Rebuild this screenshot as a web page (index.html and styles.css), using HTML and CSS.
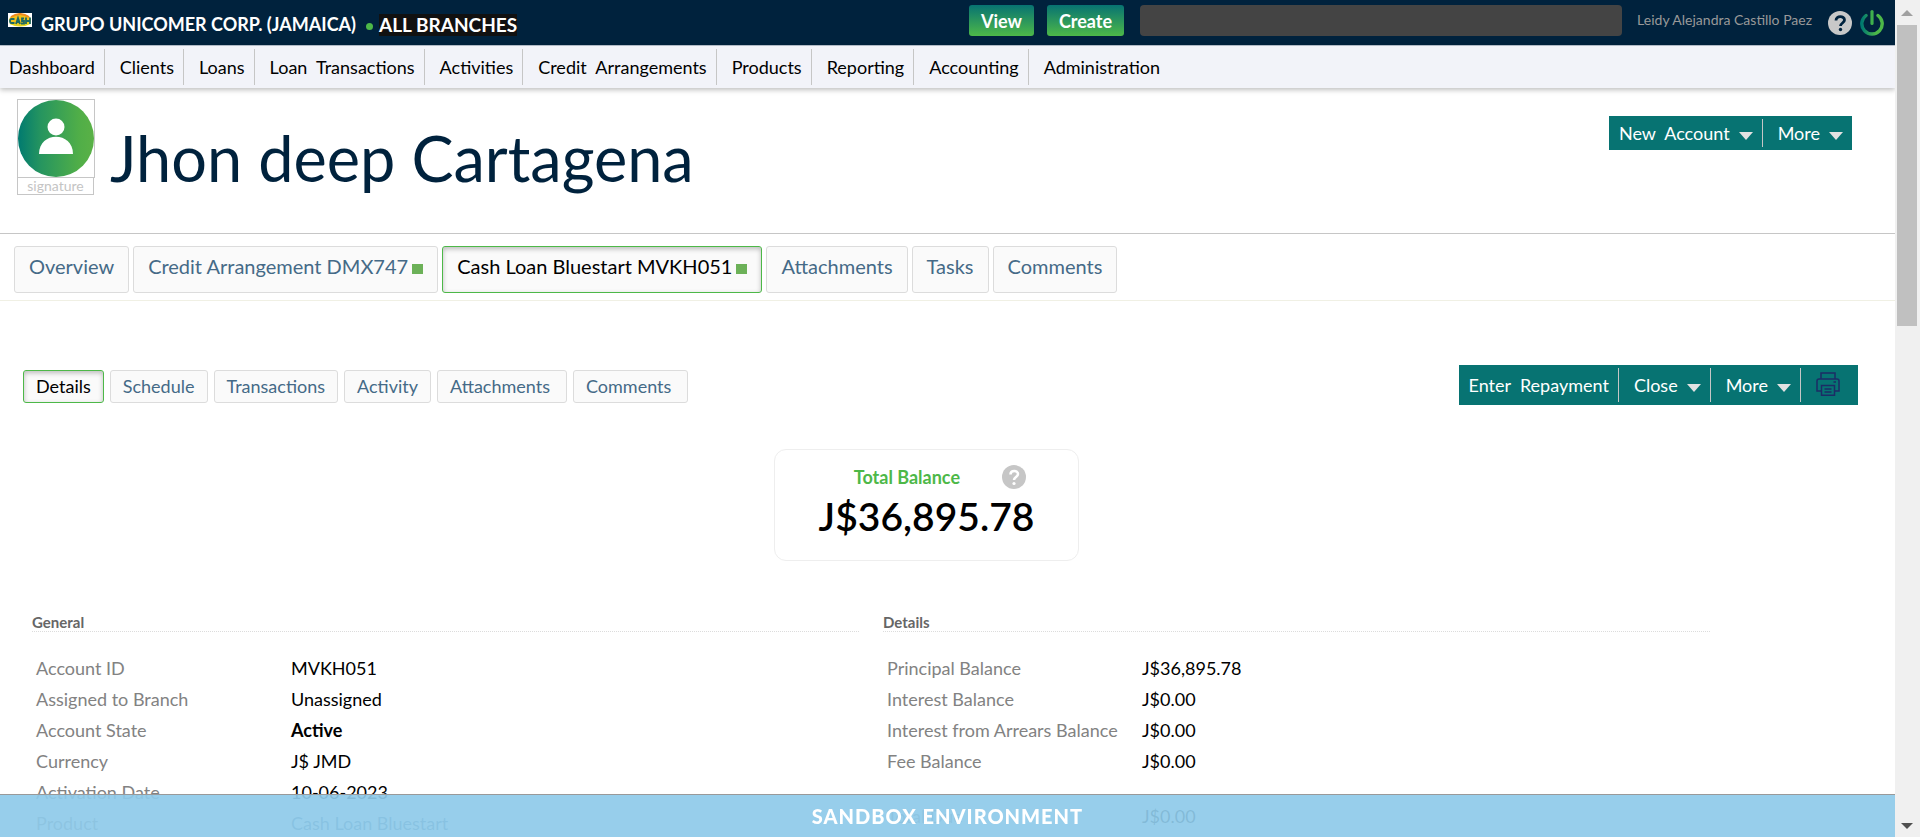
FILE: index.html
```html
<!DOCTYPE html>
<html lang="en">
<head>
<meta charset="utf-8">
<title>Jhon deep Cartagena</title>
<link rel="stylesheet" href="styles.css">
</head>
<body>
<div class="page">
  <header class="topbar">
    <svg class="logo" viewBox="0 0 24 14" aria-hidden="true">
      <rect width="24" height="14" fill="#fff"/>
      <ellipse cx="12" cy="7" rx="11" ry="6" fill="#f2c21a"/>
      <path d="M3 4 Q12 -2 21 4" stroke="#ef8a1f" stroke-width="2" fill="none"/>
      <path d="M2 10 Q12 15 22 10" stroke="#e6d61c" stroke-width="2" fill="none"/>
      <g fill="none" stroke="#1e6a62" stroke-width="1.8"><path d="M6.500 6H3.500q-1.500 0-1.500 2t1.500 2h3"/><path d="M8 11l2-6 2 6M8.500 9h3"/><path d="M16 5.500h-2v2.500h2v2.500h-3"/><path d="M18 4.500v6.500M22 4.500v6.500M18 8h4"/></g>
    </svg>
    <strong class="org">GRUPO UNICOMER CORP. (JAMAICA)</strong>
    <span class="dot"></span>
    <strong class="branches">ALL BRANCHES</strong>
    <div class="tools">
      <button class="pill" type="button">View</button>
      <button class="pill" type="button">Create</button>
      <input class="search" type="search" aria-label="Search">
    </div>
    <a class="user" href="#">Leidy Alejandra Castillo Paez</a>
    <a class="icon-link" href="#" aria-label="Help">
      <svg width="24" height="24" viewBox="0 0 24 24"><circle cx="12" cy="12" r="12" fill="#c8c8c8"/><path d="M8 9.500C8 4.500 16.500 4.500 16.500 9c0 3-4 3-4 6" fill="none" stroke="#00223d" stroke-width="2.800"/><circle cx="12.500" cy="18.500" r="1.700" fill="#00223d"/></svg>
    </a>
    <a class="icon-link" href="#" aria-label="Log out">
      <svg width="24" height="26" viewBox="0 0 24 26"><defs><linearGradient id="pw"><stop stop-color="#007a70"/><stop offset=".7" stop-color="#4db848"/></linearGradient></defs><path d="M6 5.500a10.200 10.200 0 1 0 12 0" fill="none" stroke="url(#pw)" stroke-width="3.400" stroke-linecap="round"/><rect x="10.400" y="0" width="3.200" height="15" rx="1.600" fill="#3fb04d"/></svg>
    </a>
  </header>
  <nav class="mainnav">
    <a href="#">Dashboard</a><a href="#">Clients</a><a href="#">Loans</a><a href="#">Loan&nbsp; Transactions</a><a href="#">Activities</a><a href="#">Credit&nbsp; Arrangements</a><a href="#">Products</a><a href="#">Reporting</a><a href="#">Accounting</a><a href="#">Administration</a>
  </nav>
  <section class="client">
    <div class="portrait">
      <div class="photo">
        <svg viewBox="0 0 76 77" aria-hidden="true"><defs><linearGradient id="av"><stop stop-color="#007a70"/><stop offset=".3" stop-color="#26955f"/><stop offset=".8" stop-color="#50ae48"/><stop offset="1" stop-color="#5ab146"/></linearGradient></defs><ellipse cx="38" cy="38.500" rx="38" ry="38.500" fill="url(#av)"/><circle cx="38" cy="27" r="8.500" fill="#fff"/><path d="M21 54c0-23 34-23 34 0z" fill="#fff"/></svg>
      </div>
      <div class="signature">signature</div>
    </div>
    <h1>Jhon deep Cartagena</h1>
    <div class="actions">
      <button type="button">New&nbsp; Account<span class="caret"></span></button>
      <button type="button">More<span class="caret"></span></button>
    </div>
  </section>
  <nav class="tabs">
    <a href="#">Overview</a>
    <a href="#">Credit Arrangement DMX747<span class="state"></span></a>
    <a class="current" href="#">Cash Loan Bluestart MVKH051<span class="state"></span></a>
    <a href="#">Attachments</a>
    <a href="#">Tasks</a>
    <a href="#">Comments</a>
  </nav>
  <div class="subbar">
    <nav class="subtabs">
      <a class="current" href="#">Details</a>
      <a href="#">Schedule</a>
      <a href="#">Transactions</a>
      <a href="#">Activity</a>
      <a class="wide" href="#">Attachments</a>
      <a class="wide" href="#">Comments</a>
    </nav>
    <div class="actions tall">
      <button type="button">Enter&nbsp; Repayment</button>
      <button type="button">Close<span class="caret"></span></button>
      <button type="button">More<span class="caret"></span></button>
      <button class="print" type="button" aria-label="Print">
        <svg width="24" height="24" viewBox="0 0 24 24" fill="none" stroke="#1c2c66" stroke-width="1.500"><path d="M5 7V1h14v6M5 19H1V9q0-2 2-2h18q2 0 2 2v10h-4"/><path d="M5.500 13.500h13v9.800h-13zM8.500 17h7M8.500 20h7M17.500 10h2.500"/></svg>
      </button>
    </div>
  </div>
  <div class="summary">
    <section class="balance">
      <div class="balance-head">
        <h2>Total Balance</h2>
        <a class="hint" href="#" aria-label="About total balance"><svg width="24" height="24" viewBox="0 0 24 24"><circle cx="12" cy="12" r="12" fill="#c6c6c6"/><path d="M8.500 9.500C8.500 5 16 5 16 9c0 3-4 3-4 6" fill="none" stroke="#fff" stroke-width="2.600"/><circle cx="12" cy="18.500" r="1.600" fill="#fff"/></svg></a>
      </div>
      <p class="amount">J$36,895.78</p>
    </section>
  </div>
  <div class="columns">
    <section>
      <h3>General</h3>
      <table>
        <tr><th scope="row">Account ID</th><td>MVKH051</td></tr>
        <tr><th scope="row">Assigned to Branch</th><td>Unassigned</td></tr>
        <tr><th scope="row">Account State</th><td><b>Active</b></td></tr>
        <tr><th scope="row">Currency</th><td>J$ JMD</td></tr>
        <tr><th scope="row">Activation Date</th><td>10-06-2023</td></tr>
        <tr><th scope="row">Product</th><td class="link">Cash Loan Bluestart</td></tr>
      </table>
    </section>
    <section>
      <h3>Details</h3>
      <table>
        <tr><th scope="row">Principal Balance</th><td>J$36,895.78</td></tr>
        <tr><th scope="row">Interest Balance</th><td>J$0.00</td></tr>
        <tr><th scope="row">Interest from Arrears Balance</th><td>J$0.00</td></tr>
        <tr><th scope="row">Fee Balance</th><td>J$0.00</td></tr>
      </table>
      <table class="total">
        <tr><th scope="row">Total Due</th><td>J$0.00</td></tr>
      </table>
    </section>
  </div>
</div>
<footer class="banner">SANDBOX ENVIRONMENT</footer>
<div class="scrollbar" aria-hidden="true"><span class="up"></span><span class="thumb"></span><span class="down"></span></div>
</body>
</html>
```
FILE: styles.css
```css
* { box-sizing: border-box; }
html, body { height: 100%; overflow: hidden; }
body {
  margin: 0;
  font: 400 18px/22px Lato, "Open Sans", sans-serif;
  color: #000;
  background: #fff;
}
a { color: inherit; text-decoration: none; }
button { font: inherit; color: #fff; border: 0; cursor: pointer; }
h1, h2, h3, p { margin: 0; }
svg { display: block; }
.page { margin-right: 25px; }

.topbar {
  display: flex;
  align-items: center;
  height: 46px;
  padding: 0 11px 0 8px;
  background: #00223d;
  border-bottom: 1px solid #b9c3cf;
  color: #fff;
}
.logo { width: 24px; height: 14px; margin-bottom: 6px; }
.org { margin-left: 9px; padding-top: 2px; font-weight: 700; }
.dot { width: 7px; height: 7px; margin: 8px 6px 0 10px; border-radius: 50%; background: #4db848; }
.branches { margin-top: 4px; background: #111; font-size: 19px; }
.tools { display: flex; gap: 13px; margin-left: auto; padding-bottom: 4px; }
.pill {
  height: 31px;
  padding: 0 12px;
  border-radius: 3px;
  background: linear-gradient(#077372, #4db848);
  font-weight: 700;
}
.search {
  width: 482px;
  height: 31px;
  margin-left: 3px;
  padding: 0 8px;
  border: 0;
  border-radius: 4px;
  background: #444;
  color: #fff;
}
.user { margin: 0 16px 6px 15px; font-size: 14px; color: #999; }
.icon-link + .icon-link { margin-left: 8px; }

.mainnav {
  display: flex;
  height: 42px;
  padding: 3px 0;
  background: #f2f3f9;
  box-shadow: 0 2px 5px rgba(0, 0, 0, .25);
}
.mainnav a { padding: 0 9px 0 15px; line-height: 37px; border-right: 1px solid #c6c6c6; }
.mainnav a:first-child { padding-left: 9px; }
.mainnav a:last-child { border: 0; }

.client {
  display: flex;
  align-items: flex-start;
  height: 146px;
  padding: 11px 43px 0 17px;
  border-bottom: 1px solid #c6c6c6;
}
.photo { width: 78px; border: 1px solid #c6c6c6; }
.signature {
  width: 77px;
  height: 17px;
  border: 1px solid #c6c6c6;
  border-top: 0;
  font-size: 14px;
  line-height: 15px;
  text-align: center;
  color: #c4c4c4;
}
h1 { margin: 20px 0 0 15px; font-size: 63px; line-height: 78px; font-weight: 400; color: #00223d; }
.actions { display: flex; padding: 3px 0; background: #077372; }
.client .actions { margin: 17px 0 0 auto; }
.actions button {
  display: flex;
  align-items: center;
  height: 28px;
  padding: 0 9px 0 15px;
  background: none;
  border-right: 1px solid #c6c6c6;
}
.actions button:first-child { padding-left: 10px; }
.actions button:last-child { border: 0; }
.actions.tall button { height: 34px; }
.caret {
  width: 14px;
  margin: 6px 0 0 9px;
  border: 7px solid transparent;
  border-top: 8px solid #e2e2e2;
  border-bottom: 0;
}
.actions .print { padding: 0 18px 3px 15px; }

.tabs {
  display: flex;
  gap: 4px;
  padding: 12px 14px 7px;
  border-bottom: 1px solid #f0f0e4;
}
.tabs a, .subtabs a {
  border: 1px solid #dcdcdc;
  border-radius: 3px;
  background: #fafafa;
  color: #456a87;
}
.tabs a { height: 47px; padding: 7px 14px 0; font-size: 20px; line-height: 24px; }
.tabs .current, .subtabs .current {
  border: 1px solid #4db848;
  box-shadow: inset 0 2px 5px rgba(0, 0, 0, .25);
  color: #000;
}
.state { display: inline-block; width: 11px; height: 10px; margin-left: 4px; background: #6cb158; }

.subbar { display: flex; align-items: center; justify-content: space-between; padding: 64px 37px 0 23px; }
.subtabs { display: flex; gap: 6px; padding-top: 2px; }
.subtabs a { height: 33px; padding: 0 12px; line-height: 31px; }
.subtabs .wide { padding-right: 16px; }

.summary { display: flex; justify-content: center; padding: 44px 42px 0 0; }
.balance {
  width: 305px;
  height: 112px;
  border: 1px solid #eee;
  border-radius: 12px;
  text-align: center;
}
.balance-head { display: flex; justify-content: flex-end; align-items: center; gap: 42px; padding: 15px 52px 0 0; }
h2 { font-size: 18px; line-height: 24px; color: #4db848; }
.amount { margin-top: 3px; font-size: 39px; line-height: 48px; font-weight: 600; }

.columns {
  display: grid;
  grid-template-columns: 1fr 1fr;
  gap: 24px;
  margin: 51px 185px 0 32px;
}
h3 { padding-top: 1px; border-bottom: 1px dotted #dcdcdc; font-size: 15px; line-height: 18px; color: #666; }
table { width: 100%; margin-top: 20px; border-spacing: 0; }
th, td { height: 31px; padding: 0 0 0 4px; text-align: left; font-weight: 400; }
th { width: 255px; color: #828282; }
.link { color: #456a87; }
.total { margin-top: 24px; }

.banner {
  position: fixed;
  left: 0;
  right: 25px;
  bottom: 0;
  height: 43px;
  border-top: 1px solid #999;
  background: rgba(142, 202, 233, .92);
  color: #fff;
  font-size: 20px;
  line-height: 43px;
  font-weight: 900;
  letter-spacing: 1px;
  text-align: center;
}
.scrollbar {
  position: fixed;
  top: 0;
  right: 0;
  bottom: 0;
  width: 25px;
  display: flex;
  flex-direction: column;
  padding: 10px 3px 8px 2px;
  background: #f0f0f0;
}
.up, .down { align-self: center; border: 6px solid transparent; }
.up { border-top: 0; border-bottom-color: #a0a0a0; }
.down { margin-top: auto; border-bottom: 0; border-top-color: #505050; }
.thumb { height: 301px; margin-top: 9px; background: #c0c0c0; }
```
